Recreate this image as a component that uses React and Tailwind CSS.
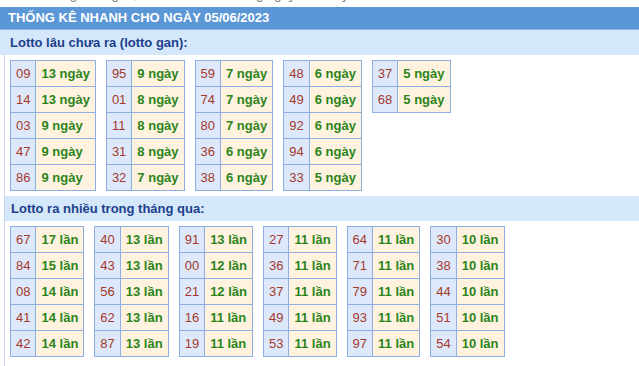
import React from 'react'

const ganRows = [
  [['09', '13 ngày'], ['14', '13 ngày'], ['03', '9 ngày'], ['47', '9 ngày'], ['86', '9 ngày']],
  [['95', '9 ngày'], ['01', '8 ngày'], ['11', '8 ngày'], ['31', '8 ngày'], ['32', '7 ngày']],
  [['59', '7 ngày'], ['74', '7 ngày'], ['80', '7 ngày'], ['36', '6 ngày'], ['38', '6 ngày']],
  [['48', '6 ngày'], ['49', '6 ngày'], ['92', '6 ngày'], ['94', '6 ngày'], ['33', '5 ngày']],
  [['37', '5 ngày'], ['68', '5 ngày']],
]

const hotRows = [
  [['67', '17 lần'], ['84', '15 lần'], ['08', '14 lần'], ['41', '14 lần'], ['42', '14 lần']],
  [['40', '13 lần'], ['43', '13 lần'], ['56', '13 lần'], ['62', '13 lần'], ['87', '13 lần']],
  [['91', '13 lần'], ['00', '12 lần'], ['21', '12 lần'], ['16', '11 lần'], ['19', '11 lần']],
  [['27', '11 lần'], ['36', '11 lần'], ['37', '11 lần'], ['49', '11 lần'], ['53', '11 lần']],
  [['64', '11 lần'], ['71', '11 lần'], ['79', '11 lần'], ['93', '11 lần'], ['97', '11 lần']],
  [['30', '10 lần'], ['38', '10 lần'], ['44', '10 lần'], ['51', '10 lần'], ['54', '10 lần']],
]

function LottoBlock({ rows }) {
  return (
    <div className="grid grid-cols-[auto_auto] border-l border-t border-[#8daee3]">
      {rows.map(([num, count]) => (
        <React.Fragment key={num}>
          <div className="border-r border-b border-[#8daee3] bg-[#dde9fb] px-[5px] py-[5px] leading-[15px] text-[#a5382c]">
            {num}
          </div>
          <div className="border-r border-b border-[#8daee3] bg-[#fff3e0] px-[5px] py-[5px] leading-[15px] font-bold text-[#2b841a]">
            {count}
          </div>
        </React.Fragment>
      ))}
    </div>
  )
}

function SubHeader({ children }) {
  return (
    <div className="h-[25px] bg-[#d5e8fb] pl-[6px] flex items-center text-[13px] font-bold text-[#1c3f8c]">
      {children}
    </div>
  )
}

export default function App() {
  return (
    <div className="w-[639px] h-[366px] overflow-hidden bg-white font-['Liberation_Sans',Arial,sans-serif] text-[13px]">
      {/* tail of the line above the box, scrolled mostly out of view */}
      <div className="h-[7px] overflow-hidden">
        <div className="mt-[-13px] pl-[14px] leading-[15px] text-[#777]">
          Xem thống kê lô gan, lô ra nhiều nhất trong ngày hôm nay
        </div>
      </div>

      <div className="h-[23px] bg-[#5b96d6] pl-[8px] flex items-center text-[13px] font-bold text-white border-b border-[#8db5e3]">
        THỐNG KÊ NHANH CHO NGÀY 05/06/2023
      </div>

      <div className="h-[25px] bg-[#d5e8fb] pl-[10px] flex items-center text-[13px] font-bold text-[#1c3f8c]">
        Lotto lâu chưa ra (lotto gan):
      </div>

      <div className="ml-[4px] border-l border-[#c9d7ea]">
        <div className="flex items-start gap-[10px] pl-[5px] pt-[5px] pb-[5px]">
          {ganRows.map((rows, i) => (
            <LottoBlock key={i} rows={rows} />
          ))}
        </div>

        <SubHeader>Lotto ra nhiều trong tháng qua:</SubHeader>

        <div className="flex items-start gap-[10px] pl-[5px] pt-[5px] pb-[10px]">
          {hotRows.map((rows, i) => (
            <LottoBlock key={i} rows={rows} />
          ))}
        </div>
      </div>
    </div>
  )
}
